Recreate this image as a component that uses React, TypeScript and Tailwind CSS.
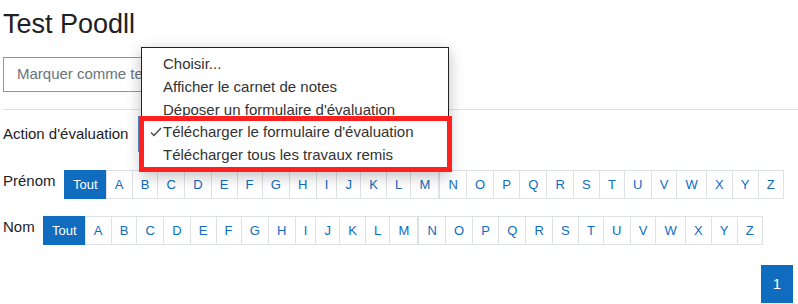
import React from "react";

const LETTERS = "ABCDEFGHIJKLMNOPQRSTUVWXYZ".split("");

function LetterBar({ label, labelW }: { label: string; labelW: string }) {
  return (
    <div className="flex items-start">
      <span className={`${labelW} text-[15px] leading-[22.5px] text-[#1d2125]`}>{label}</span>
      <div className="flex">
        <span className="h-[29px] px-[8.1px] flex items-center text-[13px] text-white bg-[#0f6cbf] border border-[#0f6cbf]">
          Tout
        </span>
        {LETTERS.map((l) => (
          <span
            key={l}
            className={`h-[29px] px-[8.1px] flex items-center text-[13px] text-[#0f6cbf] bg-white border border-[#dee2e6] ${
              l === "N" ? "ml-0" : "-ml-px"
            }`}
          >
            {l}
          </span>
        ))}
      </div>
    </div>
  );
}

export default function App() {
  const items = [
    "Choisir...",
    "Afficher le carnet de notes",
    "Déposer un formulaire d'évaluation",
    "Télécharger le formulaire d'évaluation",
    "Télécharger tous les travaux remis",
  ];
  return (
    <div
      className="relative w-[798px] h-[304px] overflow-hidden bg-white pl-[3px]"
      style={{ fontFamily: '"Liberation Sans", Arial, sans-serif' }}
    >
      <h1 className="mt-[8px] text-[27px] leading-[32px] font-normal text-[#1d2125]">Test Poodll</h1>

      <div className="mt-[17px] w-[300px] h-[35px] border border-[#8f959e] flex items-center pl-[13px] text-[15px] text-[#6a737b]">
        Marquer comme terminé
      </div>

      <div className="mt-[17px] h-px bg-[#dee2e6]" />

      <div className="mt-[6px] flex items-center h-[36px]">
        <span className="w-[135px] text-[15px] text-[#1d2125]">Action d'évaluation</span>
        <div className="w-[300px] h-[36px] border-2 border-[#5b93d3] bg-white" />
      </div>

      <div className="mt-[18px]">
        <LetterBar label="Prénom" labelW="w-[61px]" />
      </div>
      <div className="mt-[17px]">
        <LetterBar label="Nom" labelW="w-[40px]" />
      </div>

      <div className="mt-[20px] ml-[758px] w-[32px] h-[38px] bg-[#0f6cbf] text-white text-[15px] flex items-center justify-center">
        1
      </div>

      {/* dropdown menu overlay */}
      <div className="absolute left-[141px] top-[47px] w-[308px] bg-white border border-[#222] shadow-[0_4px_14px_rgba(0,0,0,0.25)] pt-[5px] pb-[4px]">
        {items.map((t, i) => (
          <div
            key={t}
            className="relative h-[22.75px] leading-[22.75px] pl-[21px] text-[15px] text-[#333] whitespace-nowrap"
          >
            {i === 3 && (
              <svg
                className="absolute left-[8px] top-[6px]"
                width="12"
                height="10"
                viewBox="0 0 12 10"
                fill="none"
              >
                <polyline points="1,5.5 4,8.5 11,1" stroke="#444" strokeWidth="1.3" fill="none" />
              </svg>
            )}
            {t}
          </div>
        ))}
      </div>

      {/* red highlight box */}
      <div className="absolute left-[139px] top-[116px] w-[313px] h-[56px] border-[5px] border-[#ff2020]" />
    </div>
  );
}
